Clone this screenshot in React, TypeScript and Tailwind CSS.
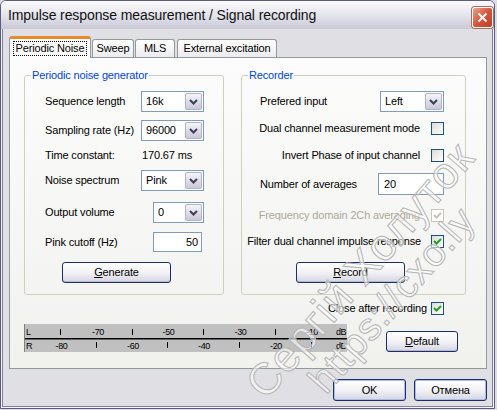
import React from "react";

function Chevron() {
  return (
    <svg width="9" height="6" viewBox="0 0 9 6">
      <path d="M1 1 L4.5 4.5 L8 1" fill="none" stroke="#3d3d55" strokeWidth="2" />
    </svg>
  );
}

function Combo({ value, className }: { value: string; className: string }) {
  return (
    <div className={`flex h-[21px] items-center border border-[#7f9db9] bg-white ${className}`}>
      <span className="flex-1 pl-[4px]">{value}</span>
      <span className="mr-[1px] flex h-[17px] w-[17px] items-center justify-center rounded-[2px] border border-[#b4b4c8] bg-gradient-to-b from-[#f5f5f9] to-[#c8c8d8]">
        <Chevron />
      </span>
    </div>
  );
}

function Check({ checked, disabled }: { checked?: boolean; disabled?: boolean }) {
  return (
    <span
      className={`flex h-[13px] w-[13px] shrink-0 items-center justify-center border ${
        disabled ? "border-[#cac8bb] bg-white" : "border-[#1c5180] bg-gradient-to-br from-[#dcdcd6] to-white"
      }`}
    >
      {checked && (
        <svg width="9" height="9" viewBox="0 0 9 9">
          <path
            d="M1 4 L3.5 6.5 L8 2"
            fill="none"
            stroke={disabled ? "#c6c4b8" : "#21a121"}
            strokeWidth="2"
          />
        </svg>
      )}
    </span>
  );
}

function Button({ children, className }: { children: React.ReactNode; className: string }) {
  return (
    <button
      className={`flex items-center justify-center rounded-[3px] border border-[#1c2f6a] bg-gradient-to-b from-white via-[#f2f2f6] to-[#d6d6e2] text-[11px] text-black shadow-[inset_0_-1px_0_#b8b8cc] ${className}`}
    >
      {children}
    </button>
  );
}

function Meter() {
  const font = { fontFamily: "'Liberation Sans', Arial, sans-serif" };
  return (
    <svg width="323" height="28" className="block" style={font}>
      <rect width="323" height="28" fill="#c0c0c0" />
      <rect x="0" y="0" width="1" height="28" fill="#808080" />
      <rect x="1" y="14" width="322" height="1.5" fill="#000" />
      <g fontSize="9" fill="#000" letterSpacing="-0.4">
        <text x="2" y="11">L</text>
        <text x="2" y="25">R</text>
        {[74, 144.5, 216.5, 288].map((x, i) => (
          <text key={x} x={x} y="11" textAnchor="middle">
            {["-70", "-50", "-30", "-10"][i]}
          </text>
        ))}
        {[37.5, 109, 180, 252].map((x, i) => (
          <text key={x} x={x} y="25" textAnchor="middle">
            {["-80", "-60", "-40", "-20"][i]}
          </text>
        ))}
        <text x="317" y="11" textAnchor="middle">dB</text>
        <text x="317" y="25" textAnchor="middle">dB</text>
      </g>
      {[36, 108, 179, 251].map((x) => (
        <rect key={x} x={x} y="5" width="1" height="6" fill="#000" />
      ))}
      {[72, 143, 215, 287].map((x) => (
        <rect key={x} x={x} y="18" width="1" height="6" fill="#000" />
      ))}
    </svg>
  );
}

export default function App() {
  return (
    <div className="relative h-[410px] w-[497px] overflow-hidden whitespace-nowrap bg-[#dcdce4] font-['Liberation_Sans',Arial,sans-serif] text-[11px] leading-[13px] tracking-[-0.15px] text-black">
      <div className="flex h-[409px] w-[495px] flex-col overflow-hidden rounded-t-[6px] border border-[#5b5b7b]">
        {/* title bar */}
        <div className="flex h-[28px] shrink-0 items-center justify-between bg-gradient-to-b from-[#fbfbfd] via-[#e4e4ec] to-[#cacad8] pl-[7px] pr-[1px]">
          <span className="text-[14px] leading-[16px] tracking-[-0.1px] text-[#111]">
            Impulse response measurement / Signal recording
          </span>
          <span className="mt-[4px] flex h-[21px] w-[21px] items-center justify-center rounded-[3px] border border-white bg-gradient-to-br from-[#eaa18b] via-[#d5553a] to-[#bf3c2a] shadow-[0_0_0_1px_#b06a5c]">
            <svg width="11" height="11" viewBox="0 0 11 11">
              <path d="M1.5 1.5 L9.5 9.5 M9.5 1.5 L1.5 9.5" stroke="#fff" strokeWidth="2" />
            </svg>
          </span>
        </div>

        <div className="flex-1 bg-[#f3f3f7] px-[1px] pb-[1px]">
          <div className="flex h-full flex-col border-x border-b border-[#7f7f9f] bg-[#e0dfe3] pl-[6px] pr-[5px]">
            {/* tabs */}
            <div className="mt-[7px] flex h-[21px] items-end gap-[1px]">
              <div className="relative z-10 -mb-[1px] flex h-[22px] w-[82px] items-center justify-center rounded-t-[3px] border-x border-t-[3px] border-x-[#919b9c] border-t-[#e68b2c] bg-[#fcfcfc]">
                <span className="border border-dotted border-black px-[2px]">Periodic Noise</span>
              </div>
              <div className="flex h-[18px] w-[42px] items-center justify-center rounded-t-[3px] border-x border-t border-[#919b9c] bg-gradient-to-b from-white to-[#ececf0]">
                Sweep
              </div>
              <div className="flex h-[18px] w-[40px] items-center justify-center rounded-t-[3px] border-x border-t border-[#919b9c] bg-gradient-to-b from-white to-[#ececf0]">
                MLS
              </div>
              <div className="ml-[1px] flex h-[18px] w-[100px] items-center justify-center rounded-t-[3px] border-x border-t border-[#919b9c] bg-gradient-to-b from-white to-[#ececf0]">
                External excitation
              </div>
            </div>

            {/* tab panel */}
            <div className="flex h-[312px] flex-col border border-[#919b9c] bg-gradient-to-b from-[#fcfcfc] to-[#f1f1ee]">
              <div className="flex gap-[17px] pl-[14px] pt-[11px]">
                <fieldset className="w-[200px] rounded-[3px] border border-[#d0d0bf] px-[6px] pb-[11px]">
                  <legend className="px-[1px] leading-[13px] text-[#0046d5]">Periodic noise generator</legend>
                  <div className="mt-[9px] flex h-[21px] items-center justify-between pl-[14px] pr-[13px]">
                    <span>Sequence length</span>
                    <Combo value="16k" className="w-[63px]" />
                  </div>
                  <div className="mt-[8px] flex h-[21px] items-center justify-between pl-[14px] pr-[13px]">
                    <span>Sampling rate (Hz)</span>
                    <Combo value="96000" className="w-[63px]" />
                  </div>
                  <div className="mt-[5px] grid h-[18px] grid-cols-[97px_auto] items-center pl-[14px]">
                    <span>Time constant:</span>
                    <span>170.67 ms</span>
                  </div>
                  <div className="mt-[6px] flex h-[21px] items-center justify-between pl-[14px] pr-[13px]">
                    <span>Noise spectrum</span>
                    <Combo value="Pink" className="w-[63px]" />
                  </div>
                  <div className="mt-[11px] flex h-[21px] items-center justify-between pl-[14px] pr-[13px]">
                    <span>Output volume</span>
                    <Combo value="0" className="w-[51px]" />
                  </div>
                  <div className="mt-[9px] flex h-[20px] items-center justify-between pl-[14px] pr-[15px]">
                    <span>Pink cutoff (Hz)</span>
                    <div className="flex h-[20px] w-[49px] items-center justify-end border border-[#7f9db9] bg-white pr-[3px]">
                      50
                    </div>
                  </div>
                  <div className="mt-[10px] pl-[31px]">
                    <Button className="h-[21px] w-[109px]">
                      <span className="underline underline-offset-1">G</span>enerate
                    </Button>
                  </div>
                </fieldset>

                <fieldset className="w-[225px] rounded-[3px] border border-[#d0d0bf] px-[6px] pb-[11px]">
                  <legend className="px-[1px] leading-[13px] text-[#0046d5]">Recorder</legend>
                  <div className="mt-[9px] flex h-[21px] items-center justify-between pl-[12px] pr-[15px]">
                    <span>Prefered input</span>
                    <Combo value="Left" className="w-[64px]" />
                  </div>
                  <div className="mt-[10px] flex h-[13px] items-center justify-end gap-[11px] pr-[15px]">
                    <span>Dual channel measurement mode</span>
                    <Check />
                  </div>
                  <div className="mt-[14px] flex h-[13px] items-center justify-end gap-[11px] pr-[15px]">
                    <span>Invert Phase of input channel</span>
                    <Check />
                  </div>
                  <div className="mt-[11px] flex h-[22px] items-center justify-between pl-[12px] pr-[15px]">
                    <span>Number of averages</span>
                    <div className="flex h-[22px] w-[66px] items-center border border-[#7f9db9] bg-white pl-[5px]">20</div>
                  </div>
                  <div className="mt-[14px] flex h-[13px] items-center justify-end gap-[11px] pr-[15px]">
                    <span className="text-[#aca899]">Frequency domain 2Ch averaging</span>
                    <Check checked disabled />
                  </div>
                  <div className="-ml-[4px] mt-[13px] flex h-[13px] items-center justify-end gap-[10px] pr-[15px]">
                    <span>Filter dual channel impulse response</span>
                    <Check checked />
                  </div>
                  <div className="mt-[14px] pl-[48px]">
                    <Button className="h-[21px] w-[109px]">
                      <span className="underline underline-offset-1">R</span>ecord
                    </Button>
                  </div>
                </fieldset>
              </div>

              <div className="mt-[7px] flex h-[13px] items-center justify-end gap-[4px] pr-[42px]">
                <span>Close after recording</span>
                <Check checked />
              </div>

              <div className="mt-[9px] flex items-start pl-[14px]">
                <Meter />
                <Button className="ml-[39px] mt-[7px] h-[21px] w-[72px]">
                  <span className="underline underline-offset-1">D</span>efault
                </Button>
              </div>
            </div>

            {/* dialog buttons */}
            <div className="mt-[10px] flex justify-end gap-[8px]">
              <Button className="h-[22px] w-[73px] shadow-[inset_0_0_0_1px_#aabce8]">OK</Button>
              <Button className="h-[22px] w-[73px] shadow-[inset_0_0_0_1px_#aabce8]">Отмена</Button>
            </div>
          </div>
        </div>
      </div>

      {/* watermark */}
      <div className="pointer-events-none absolute left-[360px] top-[270px] -translate-x-1/2 -translate-y-1/2 -rotate-[49deg] text-[44px] leading-[46px] tracking-[1px] text-white/60 [-webkit-text-stroke:1px_#b4b4b4]">
        Сергій Холуток
      </div>
      <div className="pointer-events-none absolute left-[392px] top-[300px] -translate-x-1/2 -translate-y-1/2 -rotate-[49deg] text-[39px] leading-[42px] tracking-[1px] text-white/60 [-webkit-text-stroke:1px_#b4b4b4]">
        https://cxo.ly
      </div>
    </div>
  );
}
